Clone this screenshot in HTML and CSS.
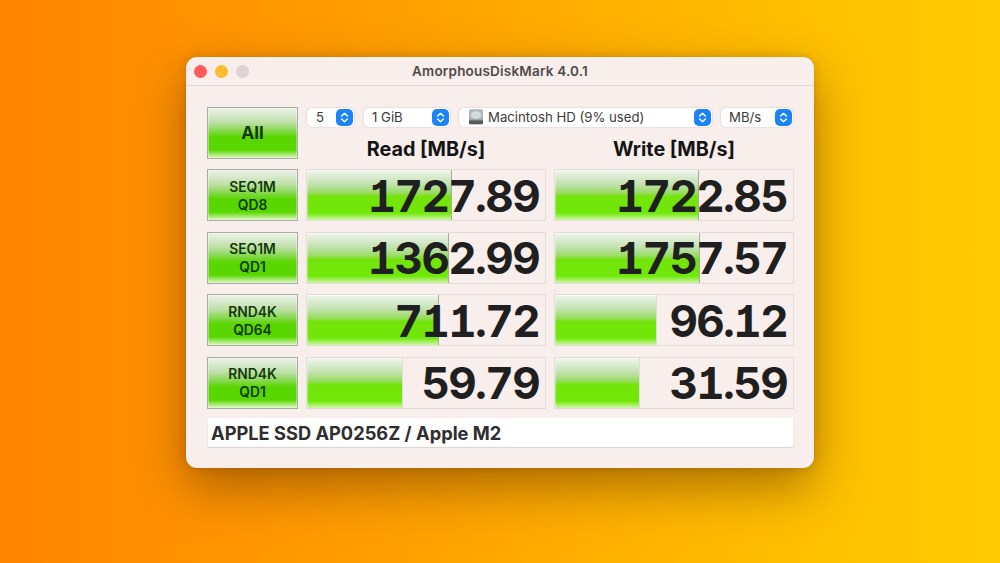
FILE: index.html
```html
<!DOCTYPE html>
<html lang="en">
<head>
<meta charset="utf-8">
<title>AmorphousDiskMark</title>
<link rel="stylesheet" href="styles.css">
</head>
<body>
<svg class="defs" width="0" height="0" aria-hidden="true">
  <symbol id="updown" viewBox="0 0 17 17">
    <path d="M5.6 7 8.5 4.2 11.4 7M5.6 10 8.5 12.8 11.4 10" fill="none" stroke="#fff" stroke-width="1.4" stroke-linecap="round" stroke-linejoin="round"/>
  </symbol>
</svg>
<main class="window">
  <header class="titlebar">
    <div class="lights"><i class="light red"></i><i class="light yellow"></i><i class="light grey"></i></div>
    <h1 class="title">AmorphousDiskMark 4.0.1</h1>
  </header>
  <section class="panel">
    <div class="grid">
      <div class="btn btn-all">All</div>
      <div class="controls">
        <div class="select s-count"><span>5</span><svg class="stepper"><use href="#updown"/></svg></div>
        <div class="select s-size"><span>1 GiB</span><svg class="stepper"><use href="#updown"/></svg></div>
        <div class="select s-disk">
          <svg class="disk" viewBox="0 0 16 16">
            <rect x="1" y="0.5" width="14" height="15" rx="2" fill="#8d9296"/>
            <rect x="1" y="0.5" width="14" height="10" rx="2" fill="#b4bbbf"/>
            <ellipse cx="8" cy="6" rx="4.8" ry="3.8" fill="#d5dadd"/>
            <rect x="1" y="11.5" width="14" height="3.5" rx="1" fill="#55595c"/>
          </svg>
          <span>Macintosh HD (9% used)</span><svg class="stepper"><use href="#updown"/></svg>
        </div>
        <div class="select s-unit"><span>MB/s</span><svg class="stepper"><use href="#updown"/></svg></div>
      </div>
      <div class="head head-read">Read [MB/s]</div>
      <div class="head">Write [MB/s]</div>

      <div class="btn">SEQ1M<br>QD8</div>
      <div class="cell"><div class="bar" style="width:145px"></div><span class="value">1727.89</span></div>
      <div class="cell"><div class="bar" style="width:144px"></div><span class="value">1722.85</span></div>

      <div class="btn">SEQ1M<br>QD1</div>
      <div class="cell"><div class="bar" style="width:142px"></div><span class="value">1362.99</span></div>
      <div class="cell"><div class="bar" style="width:145px"></div><span class="value">1757.57</span></div>

      <div class="btn">RND4K<br>QD64</div>
      <div class="cell"><div class="bar" style="width:132px"></div><span class="value">711.72</span></div>
      <div class="cell"><div class="bar bar-soft" style="width:102px"></div><span class="value">96.12</span></div>

      <div class="btn">RND4K<br>QD1</div>
      <div class="cell"><div class="bar bar-soft" style="width:96px"></div><span class="value">59.79</span></div>
      <div class="cell"><div class="bar bar-soft" style="width:85px"></div><span class="value">31.59</span></div>

      <div class="comment">APPLE SSD AP0256Z / Apple M2</div>
    </div>
  </section>
</main>
</body>
</html>
```
FILE: styles.css
```css
* { box-sizing: border-box; }
html, body { margin: 0; height: 100%; }
body {
  width: 1000px;
  height: 563px;
  overflow: hidden;
  background: linear-gradient(90deg, #ff8500 0%, #ffa000 40%, #ffc000 80%, #ffcb00 100%);
  display: flex;
  justify-content: center;
  padding-top: 57px;
  font-family: Inter, "Liberation Sans", sans-serif;
}
.defs { position: absolute; }
.window {
  width: 628px;
  height: 411px;
  background: #f8eeec;
  border-radius: 11px;
  box-shadow: 0 20px 50px rgba(90, 45, 0, 0.5), 0 0 8px rgba(90, 50, 0, 0.22);
  display: flex;
  flex-direction: column;
}
.titlebar {
  height: 29px;
  flex: none;
  display: flex;
  align-items: center;
  justify-content: center;
  position: relative;
  border-radius: 11px 11px 0 0;
  border-bottom: 1px solid #e2d8d6;
}
.lights { position: absolute; left: 8px; top: 8px; display: flex; gap: 8px; }
.light { width: 13px; height: 13px; border-radius: 50%; display: block; }
.red { background: #fc5b57; }
.yellow { background: #fdbb2f; }
.grey { background: #dcd3d2; }
.title {
  margin: 0;
  font-size: 13.5px;
  font-weight: 600;
  letter-spacing: 0.2px;
  color: #4f4a4a;
}
.panel { padding: 21px 0 0 21px; }
.grid {
  display: grid;
  grid-template-columns: 91px 240px 240px;
  grid-template-rows: 22px 19px 52px 52px 52px 52px 29px;
  column-gap: 8px;
  row-gap: 10.5px;
}
.btn {
  height: 52px;
  border: 1px solid #a9aca4;
  box-shadow: inset 0 0 0 1px rgba(255, 255, 255, 0.35);
  background: linear-gradient(180deg, #eef2ea 0%, #bfe0aa 28%, #85d84e 46%, #5ad600 58%, #58d800 84%, #d0f4ac 98%);
  display: flex;
  align-items: center;
  justify-content: center;
  text-align: center;
  padding-top: 1px;
  font-weight: 600;
  font-size: 13.8px;
  line-height: 18px;
  color: #123a08;
}
.btn-all {
  grid-row: 1 / span 2;
  height: 51.5px;
  font-size: 17.5px;
  font-weight: 700;
  color: #103808;
}
.controls { grid-column: 2 / span 2; display: flex; align-items: center; height: 20px; }
.select {
  height: 19px;
  background: #fff;
  border-radius: 5px;
  box-shadow: 0 0 2px rgba(80, 60, 60, 0.25);
  display: flex;
  align-items: center;
  padding-left: 9px;
  font-size: 13.2px;
  color: #3e3a3a;
}
.select span { flex: 1; white-space: nowrap; }
.s-count { width: 47px; margin-left: 1px; }
.s-size { width: 86px; margin-left: 10px; padding-left: 8px; }
.s-disk { width: 253px; margin-left: 9px; }
.s-unit { width: 72px; margin-left: 9px; padding-left: 8px; }
.stepper {
  width: 17px;
  height: 17px;
  flex: none;
  margin-right: 1px;
  background: #1b83f5;
  border-radius: 5px;
}
.disk { width: 16px; height: 16px; flex: none; margin-right: 4px; }
.head {
  display: flex;
  align-items: center;
  justify-content: center;
  font-weight: 700;
  font-size: 19.8px;
  color: #141414;
}
.head-read { grid-column: 2; }
.cell {
  height: 52px;
  position: relative;
  border: 1px solid #e4dbd9;
  display: flex;
  justify-content: flex-end;
  align-items: center;
  padding-right: 6px;
}
.bar {
  position: absolute;
  left: 0;
  top: 0;
  bottom: 0;
  background: linear-gradient(180deg, #f0f5ee 0%, #c4e2b0 28%, #98dc62 46%, #74e40a 53%, #70e808 86%, #d0f6a8 100%);
  border-right: 1px solid #a8ab9e;
  box-shadow: inset 1px 1px 0 rgba(255, 255, 255, 0.4);
}
.bar-soft { border-right-color: #dfe0d4; }
.value {
  position: relative;
  font-weight: 700;
  font-size: 44px;
  font-feature-settings: "tnum" 1, "cv01" 1;
  letter-spacing: -1.6px;
  line-height: 50px;
  padding-top: 1px;
  color: #1f1f1f;
}
.comment {
  grid-column: 1 / span 3;
  width: 585px;
  height: 29px;
  margin: -1px 0 0 1px;
  background: #fff;
  box-shadow: 0 1px 1px rgba(80, 60, 60, 0.15);
  display: flex;
  align-items: center;
  padding-left: 3px;
  font-weight: 700;
  font-size: 18.25px;
  color: #2e2e2e;
}
```
